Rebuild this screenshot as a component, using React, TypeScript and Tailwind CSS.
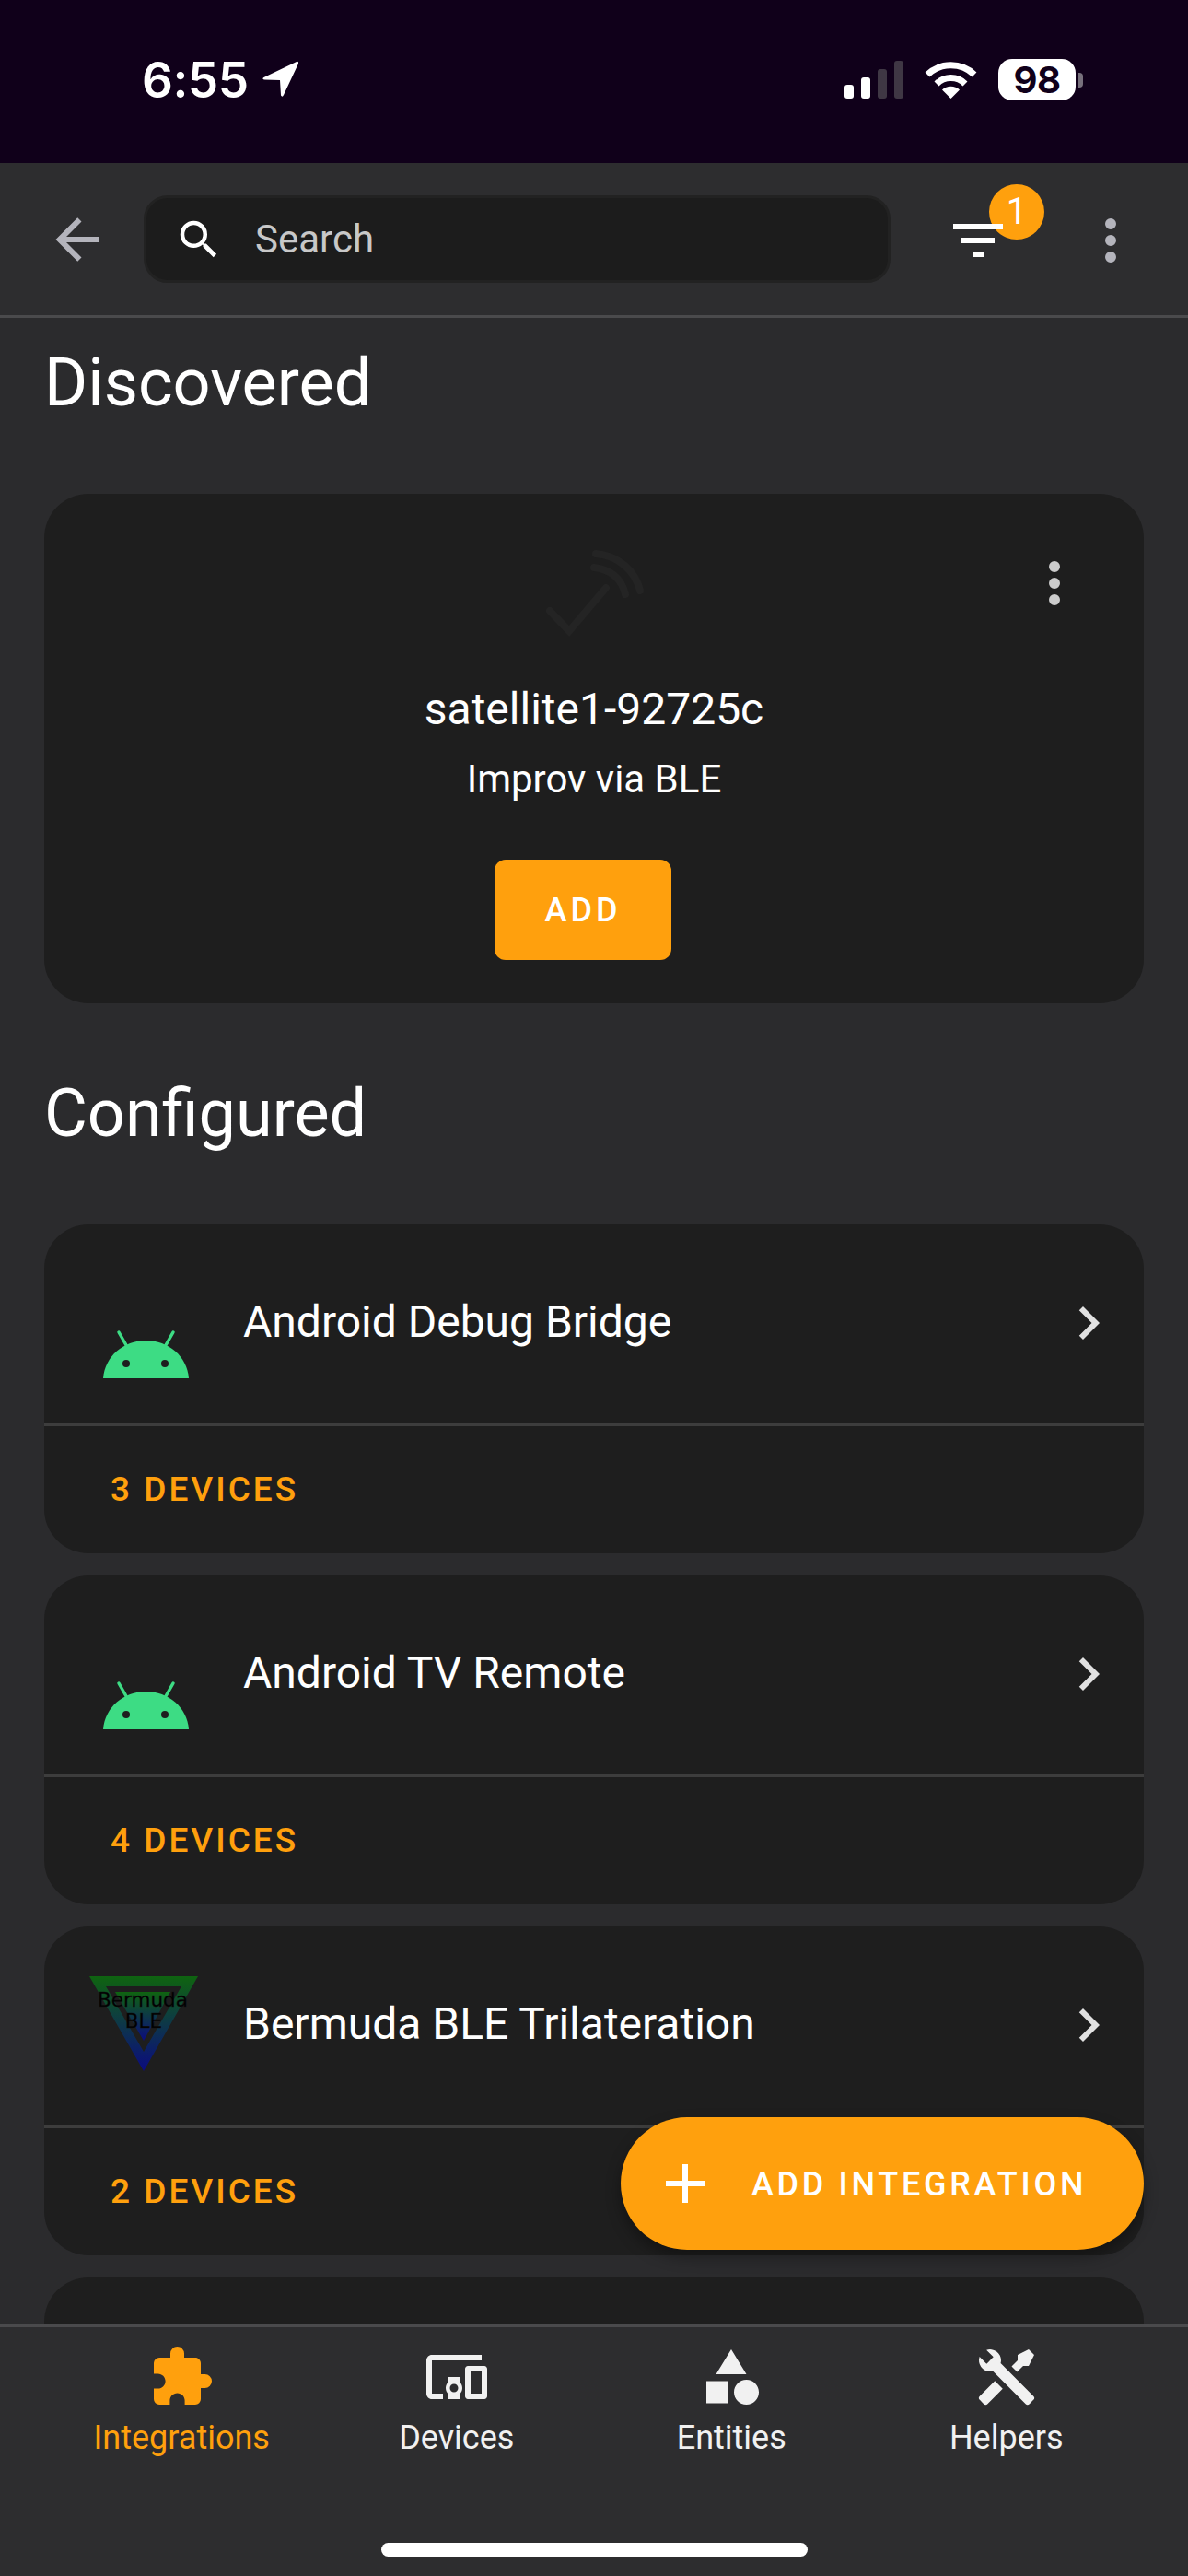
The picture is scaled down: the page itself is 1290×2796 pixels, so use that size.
const mdi = {
  arrowLeft: "M20,11V13H8L13.5,18.5L12.08,19.92L4.16,12L12.08,4.08L13.5,5.5L8,11H20Z",
  magnify:
    "M9.5,3A6.5,6.5 0 0,1 16,9.5C16,11.11 15.41,12.59 14.44,13.73L14.71,14H15.5L20.5,19L19,20.5L14,15.5V14.71L13.73,14.44C12.59,15.41 11.11,16 9.5,16A6.5,6.5 0 0,1 3,9.5A6.5,6.5 0 0,1 9.5,3M9.5,5C7,5 5,7 5,9.5C5,12 7,14 9.5,14C12,14 14,12 14,9.5C14,7 12,5 9.5,5Z",
  filter: "M6,13H18V11H6M3,6V8H21V6M10,18H14V16H10V18Z",
  dots: "M12,16A2,2 0 0,1 14,18A2,2 0 0,1 12,20A2,2 0 0,1 10,18A2,2 0 0,1 12,16M12,10A2,2 0 0,1 14,12A2,2 0 0,1 12,14A2,2 0 0,1 10,12A2,2 0 0,1 12,10M12,4A2,2 0 0,1 14,6A2,2 0 0,1 12,8A2,2 0 0,1 10,6A2,2 0 0,1 12,4Z",
  chevron: "M8.59,16.58L13.17,12L8.59,7.41L10,6L16,12L10,18L8.59,16.58Z",
  plus: "M19,13H13V19H11V13H5V11H11V5H13V11H19V13Z",
  puzzle:
    "M20.5,11H19V7C19,5.89 18.1,5 17,5H13V3.5A2.5,2.5 0 0,0 10.5,1A2.5,2.5 0 0,0 8,3.5V5H4A2,2 0 0,0 2,7V10.8H3.5C5,10.8 6.2,12 6.2,13.5C6.2,15 5,16.2 3.5,16.2H2V20A2,2 0 0,0 4,22H7.8V20.5C7.8,19 9,17.8 10.5,17.8C12,17.8 13.2,19 13.2,20.5V22H17A2,2 0 0,0 19,20V16H20.5A2.5,2.5 0 0,0 23,13.5A2.5,2.5 0 0,0 20.5,11Z",
  devices:
    "M3 6H21V4H3C1.9 4 1 4.9 1 6V18C1 19.1 1.9 20 3 20H7V18H3V6M13 12H9V13.78C8.39 14.33 8 15.11 8 16C8 16.89 8.39 17.67 9 18.22V20H13V18.22C13.61 17.67 14 16.88 14 16S13.61 14.33 13 13.78V12M11 17.5C10.17 17.5 9.5 16.83 9.5 16S10.17 14.5 11 14.5 12.5 15.17 12.5 16 11.83 17.5 11 17.5M22 8H16C15.5 8 15 8.5 15 9V19C15 19.5 15.5 20 16 20H22C22.5 20 23 19.5 23 19V9C23 8.5 22.5 8 22 8M21 18H17V10H21V18Z",
  shape:
    "M11,13.5V21.5H3V13.5H11M12,2L17.5,11H6.5L12,2M17.5,13C20,13 22,15 22,17.5C22,20 20,22 17.5,22C15,22 13,20 13,17.5C13,15 15,13 17.5,13Z",
  tools:
    "M21.71 20.29L20.29 21.71A1 1 0 0 1 18.88 21.71L7 9.85A3.81 3.81 0 0 1 6 10A4 4 0 0 1 2.22 4.7L4.76 7.24L5.29 6.71L6.71 5.29L7.24 4.76L4.7 2.22A4 4 0 0 1 10 6A3.81 3.81 0 0 1 9.85 7L21.71 18.88A1 1 0 0 1 21.71 20.29M2.29 18.88A1 1 0 0 0 2.29 20.29L3.71 21.71A1 1 0 0 0 5.12 21.71L10.59 16.25L7.76 13.42M20 2L16 4V6L13.83 8.17L15.83 10.17L18 8H20L22 4Z",
};

const Icon = ({ d, className }: { d: string; className: string }) => (
  <svg viewBox="0 0 24 24" className={className} fill="currentColor">
    <path d={d} />
  </svg>
);

const StatusBar = () => (
  <div className="h-[177px] shrink-0 bg-[#10001a] flex items-start font-['Inter',sans-serif] text-white">
    <div className="ml-[154px] mt-[57px] flex items-center h-[60px]">
      <span className="text-[53px] leading-[60px] font-semibold tracking-[-0.5px]">6:55</span>
      <svg viewBox="0 0 41 40" className="w-[41px] h-[40px] ml-[15px] mt-[-2px]" fill="white">
        <path d="M38 1 L2.5 18 Q0 19.5 3 20.5 L20 21 L21 37.5 Q22.5 40 24 37 L40 3 Q40.5 0 38 1 Z" />
      </svg>
    </div>
    <div className="ml-auto mr-[114px] mt-[64px] flex items-start">
      <div className="flex items-end gap-[8px] h-[43px] mr-[23px]">
        <div className="w-[10px] h-[15px] rounded-[3px] bg-white" />
        <div className="w-[10px] h-[23px] rounded-[3px] bg-white" />
        <div className="w-[10px] h-[32px] rounded-[3px] bg-[#3f3744]" />
        <div className="w-[10px] h-[41px] rounded-[3px] bg-[#3f3744]" />
      </div>
      <svg viewBox="0 0 57 41" className="w-[57px] h-[41px] mt-[2px] mr-[23px]" fill="none" stroke="white" strokeWidth="7">
        <path d="M3 15 A 37 37 0 0 1 54 15" />
        <path d="M13 25 A 22 22 0 0 1 44 25" />
        <path d="M28.5 41 L19 31.5 A 14 14 0 0 1 38 31.5 Z" fill="white" stroke="none" />
      </svg>
      <div className="w-[84px] h-[45px] rounded-[15px] bg-white flex items-center justify-center text-[#10001a] text-[40px] leading-none font-bold tracking-[-0.5px]">
        98
      </div>
      <div className="w-[5px] h-[16px] mt-[15px] ml-[3px] rounded-r-[4px] bg-[#77707c]" />
    </div>
  </div>
);

const Toolbar = () => (
  <div className="h-[168px] shrink-0 bg-[#2d2d2f] border-b-[3px] border-[#4a4a4c] flex items-start relative z-10">
    <Icon d={mdi.arrowLeft} className="w-[72px] h-[72px] ml-[48px] mt-[47px] text-[#b4b4bc]" />
    <div className="w-[811px] h-[95px] ml-[36px] mt-[35px] rounded-[26px] bg-[#1c1c1c] border-[3px] border-[#222222] flex items-center">
      <Icon d={mdi.magnify} className="w-[54px] h-[54px] ml-[30px] text-white" />
      <span className="ml-[34px] text-[42px] text-[#c8c8c8]">Search</span>
    </div>
    <div className="relative w-[72px] h-[72px] ml-[59px] mt-[48px]">
      <div className="absolute left-[48px] top-[-25px] w-[60px] h-[60px] rounded-full bg-[#ffa00d] flex items-center justify-center text-white text-[40px] leading-none">
        1
      </div>
      <Icon d={mdi.filter} className="absolute inset-0 w-[72px] h-[72px] text-white" />
    </div>
    <Icon d={mdi.dots} className="w-[72px] h-[72px] ml-[72px] mt-[48px] text-[#b4b4bc]" />
  </div>
);

const AndroidLogo = () => (
  <svg viewBox="0 0 120 120" className="w-[120px] h-[120px] shrink-0">
    <path d="M16 119 C 18 95, 38 78, 62.5 78 C 87 78, 107 95, 109 119 Z" fill="#3ddc84" />
    <path d="M33 69 L41 83 M92 69 L84 83" stroke="#3ddc84" strokeWidth="3.5" strokeLinecap="round" />
    <circle cx="41" cy="103" r="4" fill="#1e1e1e" />
    <circle cx="83" cy="103" r="4" fill="#1e1e1e" />
  </svg>
);

const BermudaLogo = () => (
  <svg viewBox="0 0 120 120" className="w-[120px] h-[120px] shrink-0">
    <defs>
      <linearGradient id="bermuda" x1="0" y1="0" x2="0" y2="1">
        <stop offset="0" stopColor="#0f6410" />
        <stop offset="1" stopColor="#0b0b80" />
      </linearGradient>
    </defs>
    <path fillRule="evenodd" d="M1 6 H119 L60 109 Z M19 17 L60 88 L101 17 Z" fill="url(#bermuda)" />
    <path d="M29 23 H89 L60 76 Z" fill="url(#bermuda)" />
    <g fontFamily="'DejaVu Sans',sans-serif" fontSize="21.5" textAnchor="middle" fill="#000000" stroke="#111111" strokeWidth="0.4">
      <text x="59" y="39">Bermuda</text>
      <text x="60" y="62">BLE</text>
    </g>
  </svg>
);

const IntegrationCard = ({ name, count, logo }: { name: string; count: string; logo: React.ReactNode }) => (
  <div className="h-[357px] rounded-[48px] bg-[#1e1e1e] overflow-hidden">
    <div className="h-[215px] px-[48px] flex items-start border-b-[4px] border-[#3d3d3d] box-content">
      <div className="mt-[48px]">{logo}</div>
      <span className="ml-[48px] mt-[78px] text-[48px] leading-[56px] text-white">{name}</span>
      <Icon d={mdi.chevron} className="w-[72px] h-[72px] ml-auto mt-[71px] mr-[-24px] text-[#e1e1e1]" />
    </div>
    <div className="h-[138px] px-[72px] flex items-center text-[#ffa00d] text-[37px] font-medium tracking-[3px]">
      {count}
    </div>
  </div>
);

const NavItem = ({ d, label, active }: { d: string; label: string; active?: boolean }) => (
  <div className={`flex flex-col items-center ${active ? "text-[#ffa00d]" : "text-[#f1f1f1]"}`}>
    <Icon d={d} className="w-[72px] h-[72px]" />
    <span className="mt-[8px] text-[36px] leading-[44px]">{label}</span>
  </div>
);

export default function App() {
  return (
    <div className="w-[1290px] h-[2796px] flex flex-col overflow-hidden bg-[#2b2b2d] font-['Roboto',sans-serif]">
      <StatusBar />
      <Toolbar />

      <main className="relative flex-1 overflow-hidden px-[48px]">
        <h2 className="mt-[23px] h-[96px] text-[72px] leading-[96px] text-white">Discovered</h2>

        <div className="relative mt-[72px] h-[553px] rounded-[48px] bg-[#1e1e1e] flex flex-col items-center">
          <svg viewBox="0 0 200 130" className="w-[200px] h-[130px] mt-[34px] mr-[50px]" fill="none" stroke="#242424" strokeWidth="8" strokeLinecap="round">
            <path d="M77 93 L98 115 L138 68" />
            <path d="M125 46 C 143 48, 155 58, 159 75" />
            <path d="M127 31 C 152 33, 170 50, 175 71" />
          </svg>
          <div className="mt-[42px] text-[48px] leading-[56px] text-white">satellite1-92725c</div>
          <div className="mt-[22px] text-[42px] leading-[52px] text-white">Improv via BLE</div>
          <button className="mt-[61px] mr-[24px] w-[192px] h-[109px] rounded-[12px] bg-[#ffa00d] text-white text-[36px] font-medium tracking-[4px]">
            ADD
          </button>
          <Icon d={mdi.dots} className="absolute right-[61px] top-[61px] w-[72px] h-[72px] text-[#cccccc]" />
        </div>

        <h2 className="mt-[72px] h-[96px] text-[72px] leading-[96px] text-white">Configured</h2>

        <div className="mt-[72px] flex flex-col gap-[24px]">
          <IntegrationCard name="Android Debug Bridge" count="3 DEVICES" logo={<AndroidLogo />} />
          <IntegrationCard name="Android TV Remote" count="4 DEVICES" logo={<AndroidLogo />} />
          <IntegrationCard name="Bermuda BLE Trilateration" count="2 DEVICES" logo={<BermudaLogo />} />
          <div className="h-[357px] rounded-[48px] bg-[#1e1e1e]" />
        </div>

        <button className="absolute right-[48px] bottom-[81px] w-[568px] h-[144px] rounded-full bg-[#ffa00d] flex items-center pl-[34px] text-white text-[36px] font-medium tracking-[3.7px] shadow-[0_8px_16px_rgba(0,0,0,0.35)]">
          <Icon d={mdi.plus} className="w-[72px] h-[72px] shrink-0" />
          <span className="ml-[36px] mt-[2px] whitespace-nowrap">ADD INTEGRATION</span>
        </button>
      </main>

      <nav className="h-[273px] shrink-0 bg-[#2d2d2f] border-t-[3px] border-[#4a4a4c] flex flex-col">
        <div className="grid grid-cols-4 px-[48px] pt-[18px]">
          <NavItem d={mdi.puzzle} label="Integrations" active />
          <NavItem d={mdi.devices} label="Devices" />
          <NavItem d={mdi.shape} label="Entities" />
          <NavItem d={mdi.tools} label="Helpers" />
        </div>
        <div className="mt-[92px] mx-auto w-[463px] h-[15px] rounded-full bg-white" />
      </nav>
    </div>
  );
}
